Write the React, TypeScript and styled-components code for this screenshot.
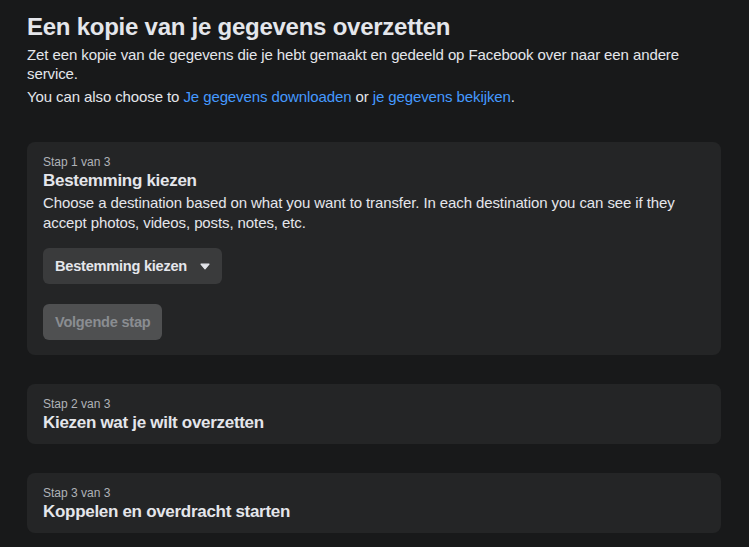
import React from 'react'
import styled, { createGlobalStyle } from 'styled-components'

const GlobalStyle = createGlobalStyle`
  html, body {
    margin: 0;
    padding: 0;
    background: #18191a;
  }
  body {
    font-family: "Liberation Sans", Arial, sans-serif;
    color: #e4e6eb;
  }
`

const Page = styled.div`
  padding: 12px 28px 14px 27px;
  min-height: 547px;
  box-sizing: border-box;
`

const Title = styled.h1`
  margin: 0;
  font-size: 24px;
  line-height: 30px;
  font-weight: 700;
  letter-spacing: -0.25px;
  color: #e4e6eb;
`

const Intro = styled.p<{ $gap?: number }>`
  margin: ${({ $gap }) => $gap ?? 3}px 0 0;
  font-size: 15px;
  line-height: 19px;
  letter-spacing: -0.1px;
  color: #e4e6eb;
`

const Link = styled.a`
  color: #4599ff;
  text-decoration: none;
  cursor: pointer;
`

const Steps = styled.div`
  display: flex;
  flex-direction: column;
  gap: 29px;
  margin-top: 36px;
`

const Card = styled.section`
  background: #242526;
  border-radius: 8px;
  padding: 12px 16px 10px;
`

const StepLabel = styled.div`
  font-size: 12px;
  line-height: 16px;
  color: #b0b3b8;
`

const StepTitle = styled.h2`
  margin: 0;
  font-size: 17px;
  line-height: 22px;
  font-weight: 700;
  letter-spacing: -0.3px;
  color: #e4e6eb;
`

const StepText = styled.p`
  margin: 1px 0 0;
  font-size: 15px;
  line-height: 20px;
  letter-spacing: -0.1px;
  color: #e4e6eb;
`

const Actions = styled.div`
  display: flex;
  flex-direction: column;
  align-items: flex-start;
  gap: 20px;
  margin-top: 15px;
  padding-bottom: 5px;
`

const Button = styled.button<{ $disabled?: boolean }>`
  display: inline-flex;
  align-items: center;
  gap: 13px;
  height: 36px;
  padding: 0 12px;
  border: none;
  border-radius: 6px;
  font-family: inherit;
  font-size: 14.6px;
  font-weight: 700;
  letter-spacing: -0.25px;
  background: ${({ $disabled }) => ($disabled ? '#4f5051' : '#3a3b3c')};
  color: ${({ $disabled }) => ($disabled ? '#8a8d91' : '#e4e6eb')};
  cursor: ${({ $disabled }) => ($disabled ? 'not-allowed' : 'pointer')};
`

const Caret = () => (
  <svg width="10" height="7" viewBox="0 0 10 7" aria-hidden="true">
    <path d="M1 1.2h8L5 5.8z" fill="#e4e6eb" stroke="#e4e6eb" strokeWidth="1.2" strokeLinejoin="round" />
  </svg>
)

const App = () => {
  return (
    <>
      <GlobalStyle />
      <Page>
        <Title>Een kopie van je gegevens overzetten</Title>
        <Intro>
          Zet een kopie van de gegevens die je hebt gemaakt en gedeeld op Facebook over naar een andere
          service.
        </Intro>
        <Intro $gap={4}>
          You can also choose to <Link>Je gegevens downloaden</Link> or{' '}
          <Link>je gegevens bekijken</Link>.
        </Intro>

        <Steps>
          <Card>
            <StepLabel>Stap 1 van 3</StepLabel>
            <StepTitle>Bestemming kiezen</StepTitle>
            <StepText>
              Choose a destination based on what you want to transfer. In each destination you can see if
              they accept photos, videos, posts, notes, etc.
            </StepText>
            <Actions>
              <Button>
                Bestemming kiezen
                <Caret />
              </Button>
              <Button $disabled>Volgende stap</Button>
            </Actions>
          </Card>
          <Card>
            <StepLabel>Stap 2 van 3</StepLabel>
            <StepTitle>Kiezen wat je wilt overzetten</StepTitle>
          </Card>
          <Card>
            <StepLabel>Stap 3 van 3</StepLabel>
            <StepTitle>Koppelen en overdracht starten</StepTitle>
          </Card>
        </Steps>
      </Page>
    </>
  )
}

export default App
